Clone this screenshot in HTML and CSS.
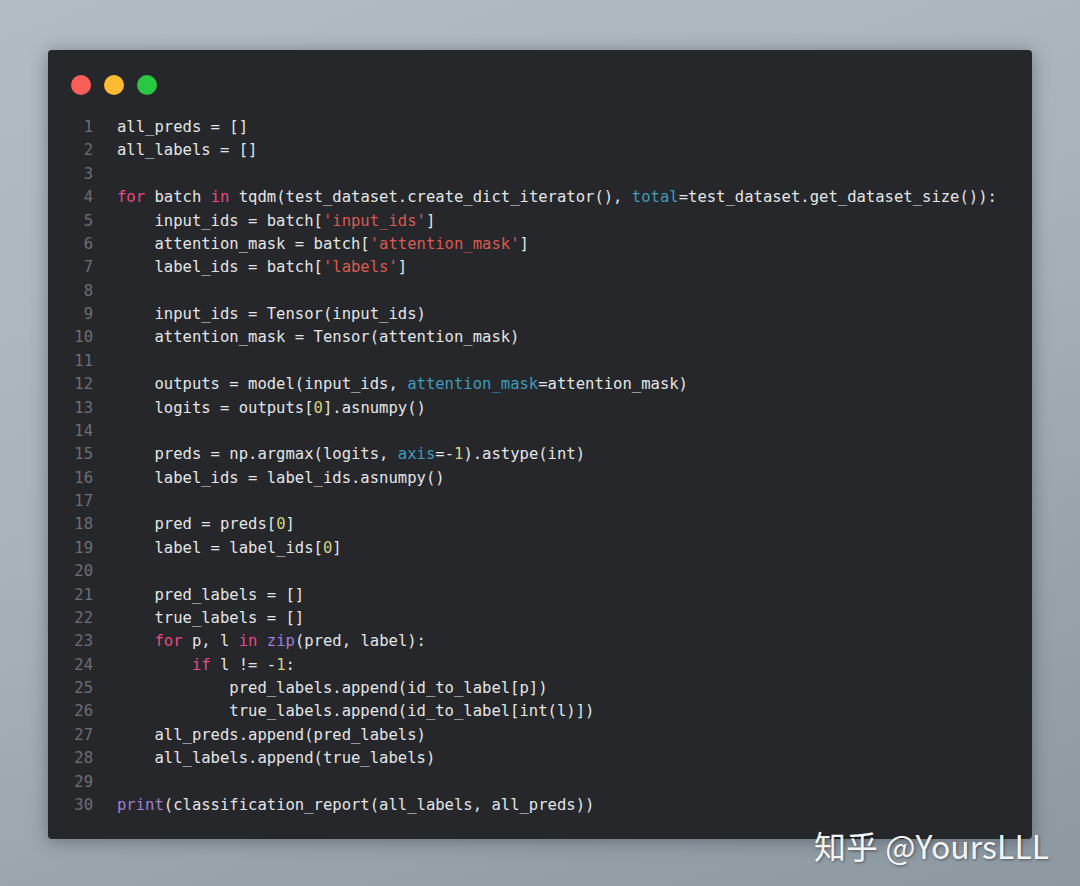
FILE: index.html
```html
<!DOCTYPE html>
<html lang="zh">
<head>
<meta charset="utf-8">
<title>code</title>
<link rel="stylesheet" href="styles.css">
</head>
<body>
<div class="stage">
  <div class="window">
    <div class="lights">
      <span class="dot red"></span>
      <span class="dot yellow"></span>
      <span class="dot green"></span>
    </div>
    <div class="code">
      <div class="ln"><span class="n">1</span><span class="t">all_preds = []</span></div>
      <div class="ln"><span class="n">2</span><span class="t">all_labels = []</span></div>
      <div class="ln"><span class="n">3</span><span class="t"></span></div>
      <div class="ln"><span class="n">4</span><span class="t"><span class="kw">for</span> batch <span class="kw">in</span> tqdm(test_dataset.create_dict_iterator(), <span class="arg">total</span>=test_dataset.get_dataset_size()):</span></div>
      <div class="ln"><span class="n">5</span><span class="t">    input_ids = batch[<span class="str">'input_ids'</span>]</span></div>
      <div class="ln"><span class="n">6</span><span class="t">    attention_mask = batch[<span class="str">'attention_mask'</span>]</span></div>
      <div class="ln"><span class="n">7</span><span class="t">    label_ids = batch[<span class="str">'labels'</span>]</span></div>
      <div class="ln"><span class="n">8</span><span class="t"></span></div>
      <div class="ln"><span class="n">9</span><span class="t">    input_ids = Tensor(input_ids)</span></div>
      <div class="ln"><span class="n">10</span><span class="t">    attention_mask = Tensor(attention_mask)</span></div>
      <div class="ln"><span class="n">11</span><span class="t"></span></div>
      <div class="ln"><span class="n">12</span><span class="t">    outputs = model(input_ids, <span class="arg">attention_mask</span>=attention_mask)</span></div>
      <div class="ln"><span class="n">13</span><span class="t">    logits = outputs[<span class="num">0</span>].asnumpy()</span></div>
      <div class="ln"><span class="n">14</span><span class="t"></span></div>
      <div class="ln"><span class="n">15</span><span class="t">    preds = np.argmax(logits, <span class="arg">axis</span>=-<span class="num">1</span>).astype(int)</span></div>
      <div class="ln"><span class="n">16</span><span class="t">    label_ids = label_ids.asnumpy()</span></div>
      <div class="ln"><span class="n">17</span><span class="t"></span></div>
      <div class="ln"><span class="n">18</span><span class="t">    pred = preds[<span class="num">0</span>]</span></div>
      <div class="ln"><span class="n">19</span><span class="t">    label = label_ids[<span class="num">0</span>]</span></div>
      <div class="ln"><span class="n">20</span><span class="t"></span></div>
      <div class="ln"><span class="n">21</span><span class="t">    pred_labels = []</span></div>
      <div class="ln"><span class="n">22</span><span class="t">    true_labels = []</span></div>
      <div class="ln"><span class="n">23</span><span class="t">    <span class="kw">for</span> p, l <span class="kw">in</span> <span class="fn">zip</span>(pred, label):</span></div>
      <div class="ln"><span class="n">24</span><span class="t">        <span class="kw">if</span> l != -<span class="num">1</span>:</span></div>
      <div class="ln"><span class="n">25</span><span class="t">            pred_labels.append(id_to_label[p])</span></div>
      <div class="ln"><span class="n">26</span><span class="t">            true_labels.append(id_to_label[int(l)])</span></div>
      <div class="ln"><span class="n">27</span><span class="t">    all_preds.append(pred_labels)</span></div>
      <div class="ln"><span class="n">28</span><span class="t">    all_labels.append(true_labels)</span></div>
      <div class="ln"><span class="n">29</span><span class="t"></span></div>
      <div class="ln"><span class="n">30</span><span class="t"><span class="fn">print</span>(classification_report(all_labels, all_preds))</span></div>
    </div>
  </div>
  <div class="mark">知乎 @YoursLLL</div>
</div>
</body>
</html>
```

FILE: styles.css
```css
html, body {
  margin: 0;
  padding: 0;
}
body {
  width: 1080px;
  height: 886px;
  overflow: hidden;
  background: linear-gradient(160deg, #b3bcc4 0%, #a9b2ba 45%, #96a0a9 80%, #8d98a1 100%);
}
.stage {
  position: relative;
  width: 1080px;
  height: 886px;
  padding-top: 50px;
  box-sizing: border-box;
}
.window {
  margin-left: 48px;
  width: 984px;
  height: 789px;
  background: #25272b;
  border-radius: 4px;
  box-shadow: 0 2px 18px rgba(40, 48, 58, 0.45);
  padding: 25px 0 0 23px;
  box-sizing: border-box;
}
.lights {
  display: flex;
  gap: 13px;
  height: 20px;
}
.dot {
  width: 20px;
  height: 20px;
  border-radius: 50%;
}
.red { background: #fc5f58; }
.yellow { background: #fdbb2f; }
.green { background: #29c841; }
.code {
  margin-top: 21px;
  font-family: "DejaVu Sans Mono", "Liberation Mono", monospace;
  font-size: 15.55px;
  line-height: 23.38px;
  color: #e4e5e6;
}
.ln {
  display: flex;
  height: 23.38px;
  white-space: pre;
}
.n {
  width: 45px;
  text-align: right;
  color: #6c6f74;
  padding-right: 24px;
  box-sizing: content-box;
  flex: none;
  margin-left: -23px;
}
.t {
  white-space: pre;
}
.kw { color: #ea4a80; }
.str { color: #dc5a4f; }
.arg { color: #3f9cbd; }
.num { color: #d6d27c; }
.fn { color: #a27ed6; }
.mark {
  position: absolute;
  left: 814px;
  top: 825px;
  font-family: "Noto Sans CJK SC", "Noto Sans", sans-serif;
  font-size: 32px;
  line-height: 40px;
  color: #f4f5f6;
  text-shadow: 1px 1px 3px rgba(0, 0, 0, 0.45);
  white-space: nowrap;
}
```
